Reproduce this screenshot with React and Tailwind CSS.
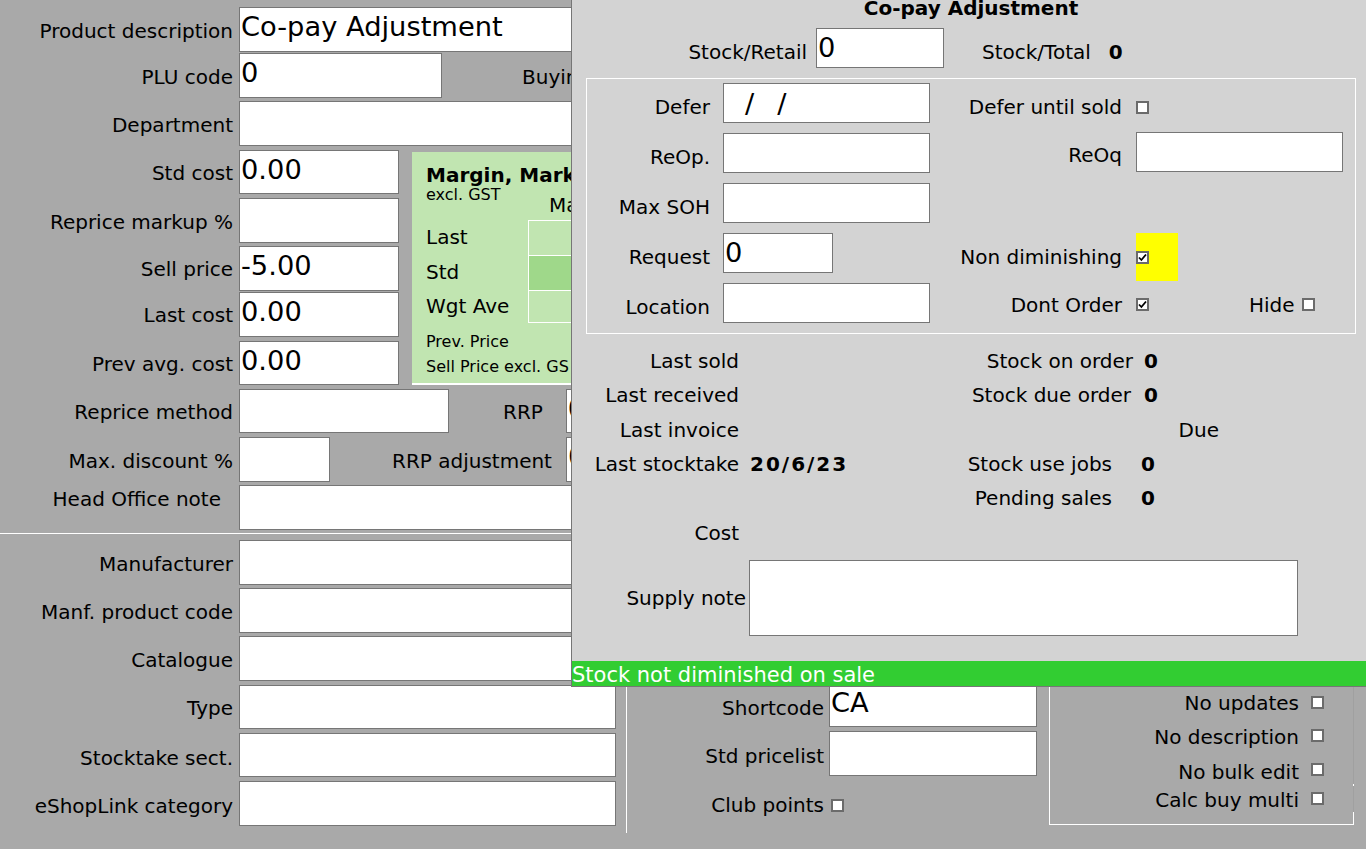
import React from "react";

const inputBase = "border border-[#767676] bg-white text-black text-[27.3px] leading-[32px] pl-[1px] pt-[3px] overflow-hidden whitespace-nowrap shrink-0";

const Box = ({ className = "", children }) => (
  <div className={`${inputBase} ${className}`}>{children}</div>
);

const Label = ({ className = "", children }) => (
  <span className={`whitespace-nowrap shrink-0 ${className}`}>{children}</span>
);

// label + input on one row of the main form
const Field = ({ label, value, rowClass = "", labelClass = "mt-[12px]", boxClass = "w-[377px] h-[45px]", children }) => (
  <div className={`flex items-start ${rowClass}`}>
    <Label className={`w-[233px] text-right ${labelClass}`}>{label}</Label>
    <Box className={`ml-[6px] ${boxClass}`}>{value}</Box>
    {children}
  </div>
);

const Check = ({ checked }) => (
  <span className="flex items-center justify-center w-[13px] h-[13px] border-2 border-[#6b6b6b] bg-white shrink-0">
    {checked && (
      <svg width="9" height="9" viewBox="0 0 9 9">
        <path d="M1 4.5 L3.4 7 L8 1.5" fill="none" stroke="#000" strokeWidth="1.8" />
      </svg>
    )}
  </span>
);

const PopRow = ({ label, rowClass = "", boxClass = "w-[207px] h-[40px]", value, children }) => (
  <div className={`flex items-start h-[50px] ${rowClass}`}>
    <Label className="w-[123px] text-right mt-[12px]">{label}</Label>
    <Box className={`ml-[13px] ${boxClass}`}>{value}</Box>
    {children}
  </div>
);

const InfoRow = ({ left, leftValue, right, rightValue, rowClass = "", rightClass = "w-[283px]", valueClass = "ml-[11px]" }) => (
  <div className={`flex h-[34px] items-center ${rowClass}`}>
    <Label className="w-[167px] text-right">{left}</Label>
    <span className="w-[100px] ml-[11px] font-bold tracking-[2px] shrink-0">{leftValue}</span>
    <Label className={`text-right ${rightClass}`}>{right}</Label>
    <span className={`font-bold ${valueClass}`}>{rightValue}</span>
  </div>
);

const BoxCheck = ({ label, rowClass, checkClass }) => (
  <div className={`flex items-center justify-end ${rowClass}`}>
    <Label>{label}</Label>
    <span className={`ml-[12px] mr-[29px] ${checkClass}`}><Check /></span>
  </div>
);

export default function App() {
  return (
    <div className="relative w-[1366px] h-[849px] overflow-hidden bg-[#a9a9a9] text-black text-[20px] leading-[24px] font-['DejaVu_Sans','Liberation_Sans',sans-serif]">
      {/* main form */}
      <div className="pt-[7px]">
        <Field label="Product description" value="Co-pay Adjustment" rowClass="h-[46px]" boxClass="w-[377px] h-[45px]" />
        <Field label="PLU code" value="0" rowClass="h-[48px]" boxClass="w-[203px] h-[45px]">
          <Label className="ml-[80px] mt-[12px]">Buying</Label>
        </Field>
        <Field label="Department" rowClass="h-[49px]" />
        <div className="flex">
          <div className="w-[412px] shrink-0">
            <Field label="Std cost" value="0.00" rowClass="h-[48px]" labelClass="mt-[11px]" boxClass="w-[160px] h-[44px]" />
            <Field label="Reprice markup %" rowClass="h-[48px]" boxClass="w-[160px] h-[45px]" />
            <Field label="Sell price" value="-5.00" rowClass="h-[46px]" labelClass="mt-[11px]" boxClass="w-[160px] h-[45px]" />
            <Field label="Last cost" value="0.00" rowClass="h-[49px]" labelClass="mt-[11px]" boxClass="w-[160px] h-[45px]" />
            <Field label="Prev avg. cost" value="0.00" rowClass="h-[48px]" labelClass="mt-[11px]" boxClass="w-[160px] h-[44px]" />
          </div>
          <div className="w-[300px] h-[233px] mt-[2px] shrink-0 bg-[#c1e5b1] border-b-2 border-white pl-[14px] pt-[12px]">
            <div className="font-bold leading-[22px]">Margin, Markup</div>
            <div className="text-[16px] leading-[18px]">excl. GST</div>
            <div className="pl-[123px] leading-[22px] -mt-[10px] mb-[4px]">Margin</div>
            <div className="flex h-[35px]">
              <Label className="w-[102px] pt-[5px]">Last</Label>
              <div className="h-full w-[100px] bg-[#c1e5b1] border border-white border-b-0" />
            </div>
            <div className="flex h-[35px]">
              <Label className="w-[102px] pt-[5px]">Std</Label>
              <div className="h-full w-[100px] bg-[#9fd88a] border-x border-t border-white" />
            </div>
            <div className="flex h-[33px]">
              <Label className="w-[102px] pt-[4px]">Wgt Ave</Label>
              <div className="h-full w-[100px] bg-[#c1e5b1] border border-white" />
            </div>
            <div className="text-[16px] leading-[20px] mt-[9px]">Prev. Price</div>
            <div className="text-[16px] leading-[20px] mt-[5px]">Sell Price excl. GS</div>
          </div>
        </div>
        <Field label="Reprice method" rowClass="h-[48px]" labelClass="mt-[11px]" boxClass="w-[210px] h-[44px]">
          <Label className="ml-[54px] mt-[11px]">RRP</Label>
          <Box className="ml-[23px] w-[6px] h-[44px]">0</Box>
        </Field>
        <Field label="Max. discount %" rowClass="h-[48px]" boxClass="w-[91px] h-[45px]">
          <Label className="ml-[62px] mt-[12px]">RRP adjustment</Label>
          <Box className="ml-[14px] w-[6px] h-[45px]">0</Box>
        </Field>
        <div className="flex items-start h-[48px]">
          <Label className="w-[221px] text-right mt-[2px]">Head Office note</Label>
          <Box className="ml-[18px] w-[377px] h-[45px]" />
        </div>
        <div className="h-[1px] bg-white" />
      </div>

      {/* lower section */}
      <div className="flex pt-[6px]">
        <div className="w-[626px] shrink-0">
          <Field label="Manufacturer" rowClass="h-[48px]" />
          <Field label="Manf. product code" rowClass="h-[48px]" />
          <Field label="Catalogue" rowClass="h-[49px]" />
          <Field label="Type" rowClass="h-[48px]" labelClass="mt-[11px]" boxClass="w-[377px] h-[44px]" />
          <Field label="Stocktake sect." rowClass="h-[48px]" labelClass="mt-[13px]" boxClass="w-[377px] h-[44px]" />
          <Field label="eShopLink category" rowClass="h-[45px]" labelClass="mt-[13px]" />
        </div>
        <div className="w-[423px] h-[293px] shrink-0 border-l border-white pt-[147px]">
          <div className="flex items-start h-[44px]">
            <Label className="w-[197px] text-right mt-[9px]">Shortcode</Label>
            <Box className="ml-[5px] w-[208px] h-[42px] -mt-[2px] !pt-[1px]">CA</Box>
          </div>
          <div className="flex items-start h-[47px]">
            <Label className="w-[197px] text-right mt-[13px]">Std pricelist</Label>
            <Box className="ml-[5px] w-[208px] h-[45px]" />
          </div>
          <div className="flex items-center h-[24px] mt-[15px]">
            <Label className="w-[197px] text-right">Club points</Label>
            <span className="ml-[7px]"><Check /></span>
          </div>
        </div>
        <div className="w-[305px] h-[285px] flex border-l border-b border-white">
          <div className="flex-1 pt-[151px]">
            <BoxCheck label="No updates" rowClass="h-[24px]" checkClass="mb-[2px]" />
            <BoxCheck label="No description" rowClass="h-[24px] mt-[10px]" checkClass="mb-[4px]" />
            <BoxCheck label="No bulk edit" rowClass="h-[24px] mt-[11px]" checkClass="mb-[6px]" />
            <BoxCheck label="Calc buy multi" rowClass="h-[24px] mt-[4px]" checkClass="mb-[3px]" />
          </div>
          <div className="w-px h-full flex flex-col bg-[#a0a0a0]">
            <div className="h-[244px]" />
            <div className="h-[2px] bg-white" />
            <div className="h-[26px]" />
            <div className="flex-1 bg-white" />
          </div>
        </div>
      </div>

      {/* stock popup */}
      <div className="absolute left-[571px] top-0 w-[795px] h-[687px] bg-[#d3d3d3] border-l border-b border-[#767676] flex flex-col">
        <div className="font-bold text-center pl-[4px] h-[16px] leading-[16px]">Co-pay Adjustment</div>
        <div className="flex items-start h-[50px] mt-[12px]">
          <Label className="w-[235px] text-right mt-[12px]">Stock/Retail</Label>
          <Box className="ml-[9px] w-[128px] h-[40px]">0</Box>
          <Label className="ml-[38px] mt-[12px]">Stock/Total</Label>
          <span className="ml-[18px] mt-[12px] font-bold">0</span>
        </div>
        <div className="ml-[14px] w-[770px] h-[256px] border border-white pt-[4px]">
          <PopRow
            label="Defer"
            value={<span className="block pl-[20px] mt-[1px]">/<span className="ml-[23px]">/</span></span>}
          >
            <Label className="w-[192px] text-right mt-[12px]">Defer until sold</Label>
            <span className="ml-[14px] mt-[18px]"><Check /></span>
          </PopRow>
          <PopRow label="ReOp.">
            <Label className="w-[192px] text-right mt-[10px]">ReOq</Label>
            <Box className="ml-[14px] -mt-[1px] w-[207px] h-[40px]" />
          </PopRow>
          <PopRow label="Max SOH" />
          <PopRow label="Request" value="0" boxClass="w-[110px] h-[40px]">
            <Label className="w-[289px] text-right mt-[12px]">Non diminishing</Label>
            <div className="ml-[14px] w-[42px] h-[48px] bg-[#ffff00] flex items-center">
              <Check checked />
            </div>
          </PopRow>
          <PopRow label="Location">
            <Label className="w-[192px] text-right mt-[10px]">Dont Order</Label>
            <span className="ml-[14px] mt-[15px]"><Check checked /></span>
            <Label className="ml-[100px] mt-[10px]">Hide</Label>
            <span className="ml-[7px] mt-[15px]"><Check /></span>
          </PopRow>
        </div>
        <div className="mt-[10px]">
          <InfoRow left="Last sold" right="Stock on order" rightValue="0" />
          <InfoRow left="Last received" right="Stock due order" rightValue="0" rightClass="w-[281px]" valueClass="ml-[13px]" />
          <InfoRow left="Last invoice" right="Due" rowClass="mt-[1px]" rightClass="w-[369px]" />
          <InfoRow left="Last stocktake" leftValue="20/6/23" right="Stock use jobs" rightValue="0" rightClass="w-[262px]" valueClass="ml-[29px]" />
          <InfoRow right="Pending sales" rightValue="0" rightClass="w-[262px]" valueClass="ml-[29px]" />
          <InfoRow left="Cost" rowClass="mt-[1px]" />
        </div>
        <div className="flex items-center mt-[10px]">
          <Label className="w-[174px] text-right">Supply note</Label>
          <Box className="ml-[3px] w-[549px] h-[76px]" />
        </div>
        <div className="mt-auto h-[25px] bg-[#32cd32] text-white text-[21px] leading-[25px] pt-[2px]">Stock not diminished on sale</div>
      </div>
    </div>
  );
}
